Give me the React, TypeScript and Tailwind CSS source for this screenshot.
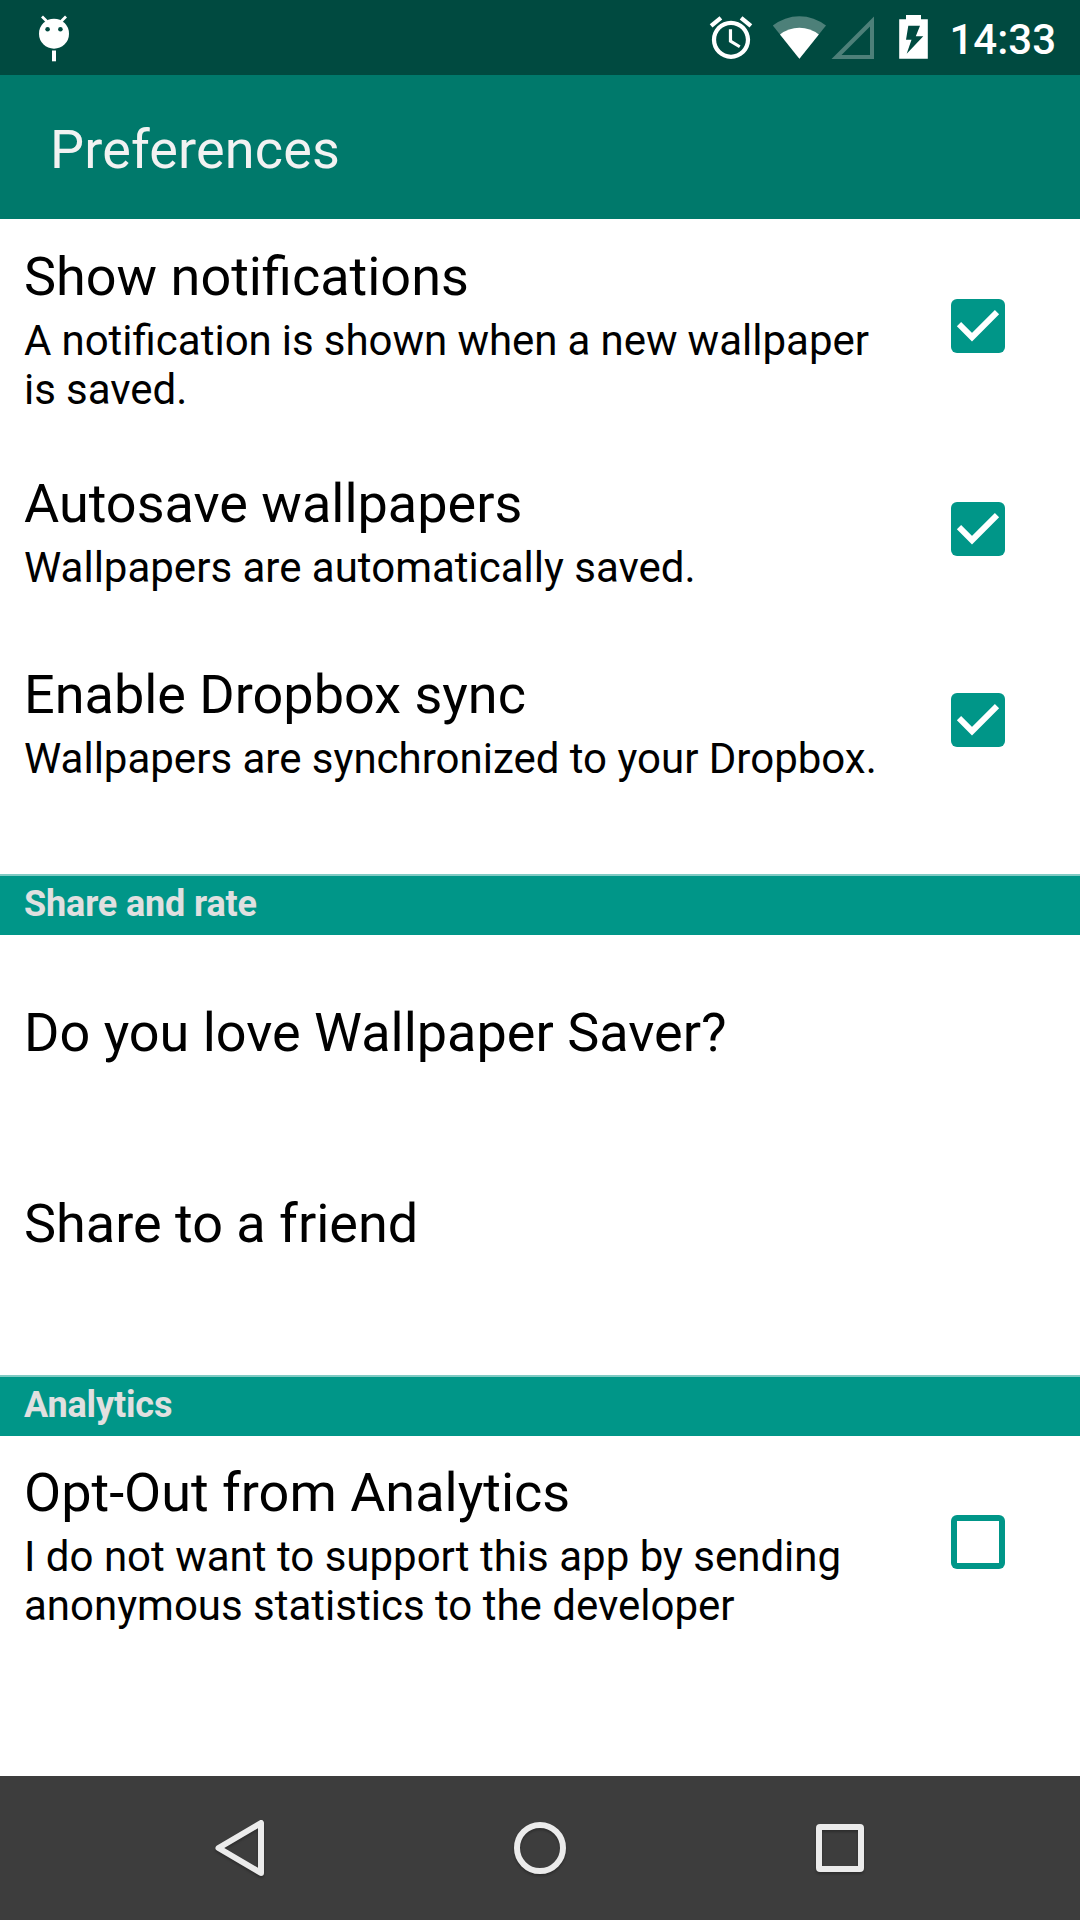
import React from "react";

type PreferenceProps = {
    title: string;
    summary?: string;
    summaryClass?: string;
    checked?: boolean;
    tall?: boolean;
};

const Checkbox: React.FC<{ checked: boolean }> = ({ checked }) => {
    if (!checked) {
        return (
            <span className="mb-0.5 block size-[54px] shrink-0 rounded-[6px] bg-[#009688] p-[6px]">
                <span className="block size-full bg-white" />
            </span>
        );
    }
    return (
        <span className="mb-0.5 block size-[54px] shrink-0 rounded-[6px] bg-[#009688]">
            <svg viewBox="0 0 54 54" className="size-full" fill="none" stroke="#fff" strokeWidth="6">
                <path d="M8 25.2 L21 38.2 L46 13.2" />
            </svg>
        </span>
    );
};

const Preference: React.FC<PreferenceProps> = ({ title, summary, summaryClass = "", checked, tall }) => {
    return (
        <div className={`flex items-center justify-between pl-6 pr-[75px] ${tall ? "h-[215px]" : "h-[191px]"}`}>
            <div className="pt-[5px]">
                <div className="text-[54px] leading-[63px]">{title}</div>
                {summary && (
                    <div className={`mt-2 max-w-[860px] whitespace-pre-line text-[42px] leading-[49px] ${summaryClass}`}>
                        {summary}
                    </div>
                )}
            </div>
            {checked !== undefined && <Checkbox checked={checked} />}
        </div>
    );
};

const SectionHeader: React.FC<{ label: string }> = ({ label }) => {
    return (
        <div className="mt-[58px] -mb-px h-[61px] border-t-2 border-[#80cbc4] bg-[#009688] pl-6 pt-[7px] text-4xl leading-[42px] font-bold tracking-[-0.15px] text-[#e0e0e0]">
            {label}
        </div>
    );
};

const StatusBar: React.FC = () => {
    return (
        <div className="flex h-[75px] items-center justify-between bg-[#004a40] pl-9 pr-6 text-white">
            {/* Debug icon */}
            <svg viewBox="36 0 36 75" className="h-[75px] w-9">
                <path d="M42 16.5 L47 21.5 M66 16.5 L61 21.5" stroke="#fff" strokeWidth="2.8" />
                <circle cx="54" cy="33.7" r="15" fill="#fff" />
                <circle cx="47.6" cy="29.3" r="2.3" fill="#004a40" />
                <circle cx="60.4" cy="29.3" r="2.3" fill="#004a40" />
                <rect x="52" y="50.5" width="4" height="10.8" fill="#fff" />
            </svg>

            <div className="flex items-center">
                {/* Alarm */}
                <svg viewBox="704 0 60 75" className="h-[75px] w-[60px]">
                    <path
                        transform="translate(705.5 12.2) scale(2.125)"
                        fill="#fff"
                        d="M22 5.72l-4.6-3.86-1.29 1.53 4.6 3.86L22 5.72zM7.88 3.39L6.6 1.86 2 5.71l1.29 1.53 4.59-3.85zM12.5 8H11v6l4.75 2.85.75-1.23-4-2.37V8zM12 4c-4.97 0-9 4.03-9 9s4.02 9 9 9c4.97 0 9-4.03 9-9s-4.03-9-9-9zm0 16c-3.87 0-7-3.13-7-7s3.13-7 7-7 7 3.13 7 7-3.13 7-7 7z"
                    />
                </svg>
                {/* Wifi */}
                <svg viewBox="764 0 64 75" className="h-[75px] w-16">
                    <path d="M799.4 58.8 L772.8 25.6 A42.8 42.8 0 0 1 826 25.6 Z" fill="#4d8079" />
                    <path d="M799.4 58.8 L780 34.4 A31.2 31.2 0 0 1 818.8 34.4 Z" fill="#fff" />
                </svg>
                {/* Mobile signal */}
                <svg viewBox="828 0 60 75" className="h-[75px] w-[60px]">
                    <path d="M831.5 59 L874 16.5 V59 Z M841.5 55 H870 V26.5 Z" fill="#4d8079" fillRule="evenodd" />
                </svg>
                {/* Battery */}
                <svg viewBox="888 0 60 75" className="h-[75px] w-[60px]">
                    <path d="M899.2 19.2 H906 V15 H921 V19.2 H927.8 V58.8 H899.2 Z" fill="#fff" />
                    <path d="M908.3 25.8 H920 L915.8 36.3 H923.3 L906.7 53.8 L911.5 39.8 H906 Z" fill="#004a40" />
                </svg>
                <span className="w-[108px] pt-1 text-right text-[42px] leading-[49px] font-medium">14:33</span>
            </div>
        </div>
    );
};

const NavigationBar: React.FC = () => {
    return (
        <div className="flex h-36 items-center justify-center gap-[204px] bg-[#3d3d3d]">
            <svg viewBox="0 0 96 96" className="size-24 drop-shadow-[0_2px_1px_rgba(0,0,0,0.25)]" fill="none" stroke="#ebebeb" strokeWidth="6" strokeLinejoin="round">
                <path d="M26.5 48 L69 23 V73 Z" />
            </svg>
            <svg viewBox="0 0 96 96" className="size-24 drop-shadow-[0_2px_1px_rgba(0,0,0,0.25)]" fill="none" stroke="#ebebeb" strokeWidth="6">
                <circle cx="48" cy="48" r="23" />
            </svg>
            <svg viewBox="0 0 96 96" className="size-24 drop-shadow-[0_2px_1px_rgba(0,0,0,0.25)]" fill="#ebebeb" fillRule="evenodd">
                <path d="M28 24 H68 Q72 24 72 28 V68 Q72 72 68 72 H28 Q24 72 24 68 V28 Q24 24 28 24 Z M30 30 V66 H66 V30 Z" />
            </svg>
        </div>
    );
};

const App: React.FC = () => {
    return (
        <div className="flex h-[1920px] w-[1080px] flex-col bg-white font-['Roboto',sans-serif] text-black">
            <StatusBar />

            {/* Action bar */}
            <div className="flex h-36 items-center bg-[#00796b] pl-[50px] pt-1 text-[54px] leading-[63px] tracking-[0.15px] text-[#f2f2f2]">
                Preferences
            </div>

            <div className="flex-1">
                <Preference
                    title="Show notifications"
                    summary={"A notification is shown when a new wallpaper\nis saved."}
                    summaryClass="[word-spacing:-0.35px]"
                    checked={true}
                    tall
                />
                <Preference title="Autosave wallpapers" summary="Wallpapers are automatically saved." checked={true} />
                <Preference title="Enable Dropbox sync" summary="Wallpapers are synchronized to your Dropbox." checked={true} />

                <SectionHeader label="Share and rate" />
                <div className="pb-px">
                    <Preference title="Do you love Wallpaper Saver?" />
                    <Preference title="Share to a friend" />
                </div>

                <SectionHeader label="Analytics" />
                <Preference
                    title="Opt-Out from Analytics"
                    summary={"I do not want to support this app by sending\nanonymous statistics to the developer"}
                    checked={false}
                    tall
                />
            </div>

            <NavigationBar />
        </div>
    );
};

export default App;
